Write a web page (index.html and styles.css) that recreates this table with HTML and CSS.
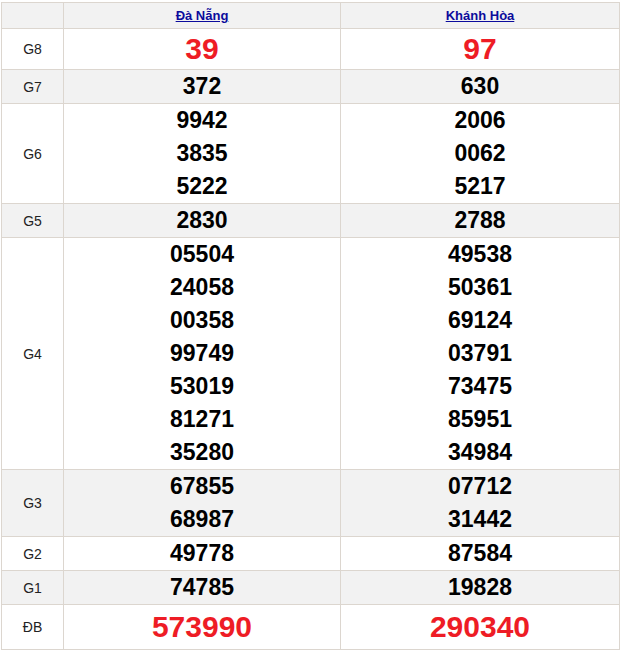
FILE: index.html
```html
<!DOCTYPE html>
<html lang="vi">
<head>
<meta charset="utf-8">
<title>KQXS</title>
<link rel="stylesheet" href="styles.css">
</head>
<body>
<table class="kq">
  <colgroup><col class="c-label"><col class="c-prov"><col class="c-prov2"></colgroup>
  <thead>
    <tr class="head">
      <th></th>
      <th><a href="#">Đà Nẵng</a></th>
      <th><a href="#">Khánh Hòa</a></th>
    </tr>
  </thead>
  <tbody>
    <tr class="g8">
      <td class="lbl">G8</td>
      <td><div class="big">39</div></td>
      <td><div class="big">97</div></td>
    </tr>
    <tr class="alt">
      <td class="lbl">G7</td>
      <td><div class="n">372</div></td>
      <td><div class="n">630</div></td>
    </tr>
    <tr>
      <td class="lbl">G6</td>
      <td><div class="n">9942</div><div class="n">3835</div><div class="n">5222</div></td>
      <td><div class="n">2006</div><div class="n">0062</div><div class="n">5217</div></td>
    </tr>
    <tr class="alt">
      <td class="lbl">G5</td>
      <td><div class="n">2830</div></td>
      <td><div class="n">2788</div></td>
    </tr>
    <tr>
      <td class="lbl">G4</td>
      <td><div class="n">05504</div><div class="n">24058</div><div class="n">00358</div><div class="n">99749</div><div class="n">53019</div><div class="n">81271</div><div class="n">35280</div></td>
      <td><div class="n">49538</div><div class="n">50361</div><div class="n">69124</div><div class="n">03791</div><div class="n">73475</div><div class="n">85951</div><div class="n">34984</div></td>
    </tr>
    <tr class="alt">
      <td class="lbl">G3</td>
      <td><div class="n">67855</div><div class="n">68987</div></td>
      <td><div class="n">07712</div><div class="n">31442</div></td>
    </tr>
    <tr>
      <td class="lbl">G2</td>
      <td><div class="n">49778</div></td>
      <td><div class="n">87584</div></td>
    </tr>
    <tr class="alt">
      <td class="lbl">G1</td>
      <td><div class="n">74785</div></td>
      <td><div class="n">19828</div></td>
    </tr>
    <tr class="db">
      <td class="lbl">ĐB</td>
      <td><div class="big db-n">573990</div></td>
      <td><div class="big db-n">290340</div></td>
    </tr>
  </tbody>
</table>
</body>
</html>
```

FILE: styles.css
```css
html, body {
  margin: 0;
  padding: 0;
  background: #ffffff;
}

body {
  font-family: "Liberation Sans", Arial, sans-serif;
  color: #000;
}

.kq {
  margin: 2px 0 0 1px;
  width: 618px;
  border-collapse: collapse;
  table-layout: fixed;
  border: 1px solid #dcd6cf;
}

.c-label { width: 62px; }
.c-prov { width: 277px; }
.c-prov2 { width: 279px; }

.kq th,
.kq td {
  border: 1px solid #dcd6cf;
  padding: 0;
  text-align: center;
  vertical-align: middle;
}

.head th {
  background: #f2f2f2;
  height: 25px;
  font-size: 13px;
  font-weight: bold;
  line-height: 25px;
}

.head a {
  color: #0b0b9c;
  text-decoration: underline;
}

.alt td {
  background: #f2f2f2;
}

.lbl {
  font-size: 14px;
  color: #222;
}

.n {
  font-size: 23px;
  font-weight: bold;
  line-height: 33px;
  height: 33px;
}

.big {
  font-size: 30px;
  font-weight: bold;
  color: #ee1c25;
  line-height: 40px;
  height: 40px;
}

.db-n {
  line-height: 44px;
  height: 44px;
}
```
